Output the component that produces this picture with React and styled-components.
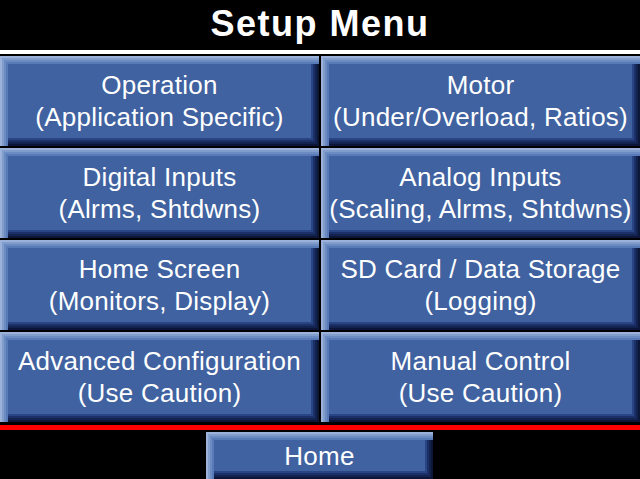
import styled, { createGlobalStyle } from "styled-components";

const GlobalStyle = createGlobalStyle`
  html, body {
    margin: 0;
    padding: 0;
    background: #000000;
  }
  body {
    font-family: "Liberation Sans", Arial, sans-serif;
    -webkit-font-smoothing: none;
  }
`;

const Screen = styled.div`
  width: 640px;
  height: 479px;
  background: #000000;
  display: flex;
  flex-direction: column;
  overflow: hidden;
`;

const TitleBar = styled.div`
  height: 50px;
  line-height: 48px;
  padding-bottom: 2px;
  box-sizing: border-box;
  text-align: center;
  color: #ffffff;
  font-size: 36px;
  font-weight: bold;
  letter-spacing: 1.5px;
`;

const Rule = styled.div`
  height: ${(p) => p.size}px;
  background: ${(p) => p.color};
  margin-bottom: ${(p) => p.after}px;
`;

const Grid = styled.div`
  display: grid;
  grid-template-columns: 319px 319px;
  grid-template-rows: repeat(4, 90px);
  gap: 2px;
  margin-bottom: 3px;
`;

const bevel = `
  background: #4062a0;
  box-shadow:
    inset 2px 2px 0 0 #9cb2da,
    inset 4px 4px 0 0 #819dcc,
    inset 6px 6px 0 0 #6b8bc2,
    inset 8px 8px 0 0 #587ab6,
    inset -2px -2px 0 0 #0b1638,
    inset -4px -4px 0 0 #13224f,
    inset -6px -6px 0 0 #1b2f68,
    inset -8px -8px 0 0 #2a4584;
`;

const MenuButton = styled.button`
  ${bevel}
  border: none;
  margin: 0;
  padding: 0;
  display: flex;
  flex-direction: column;
  align-items: center;
  justify-content: center;
  color: #ffffff;
  font-family: "Liberation Sans", Arial, sans-serif;
  font-size: 26px;
  line-height: 32px;
  letter-spacing: 0.25px;
  white-space: nowrap;
  cursor: pointer;
`;

const Footer = styled.div`
  height: 47px;
  display: flex;
  justify-content: flex-start;
  padding-left: 206px;
`;

const HomeButton = styled(MenuButton)`
  width: 227px;
  height: 47px;
`;

const items = [
  ["Operation", "(Application Specific)"],
  ["Motor", "(Under/Overload, Ratios)"],
  ["Digital Inputs", "(Alrms, Shtdwns)"],
  ["Analog Inputs", "(Scaling, Alrms, Shtdwns)"],
  ["Home Screen", "(Monitors, Display)"],
  ["SD Card / Data Storage", "(Logging)"],
  ["Advanced Configuration", "(Use Caution)"],
  ["Manual Control", "(Use Caution)"],
];

const App = () => {
  return (
    <>
      <GlobalStyle />
      <Screen>
        <TitleBar>Setup Menu</TitleBar>
        <Rule size={4} color="#ffffff" after={2} />
        <Grid>
          {items.map(([title, sub]) => (
            <MenuButton key={title}>
              <span>{title}</span>
              <span>{sub}</span>
            </MenuButton>
          ))}
        </Grid>
        <Rule size={5} color="#ff0000" after={2} />
        <Footer>
          <HomeButton>Home</HomeButton>
        </Footer>
      </Screen>
    </>
  );
};

export default App;
